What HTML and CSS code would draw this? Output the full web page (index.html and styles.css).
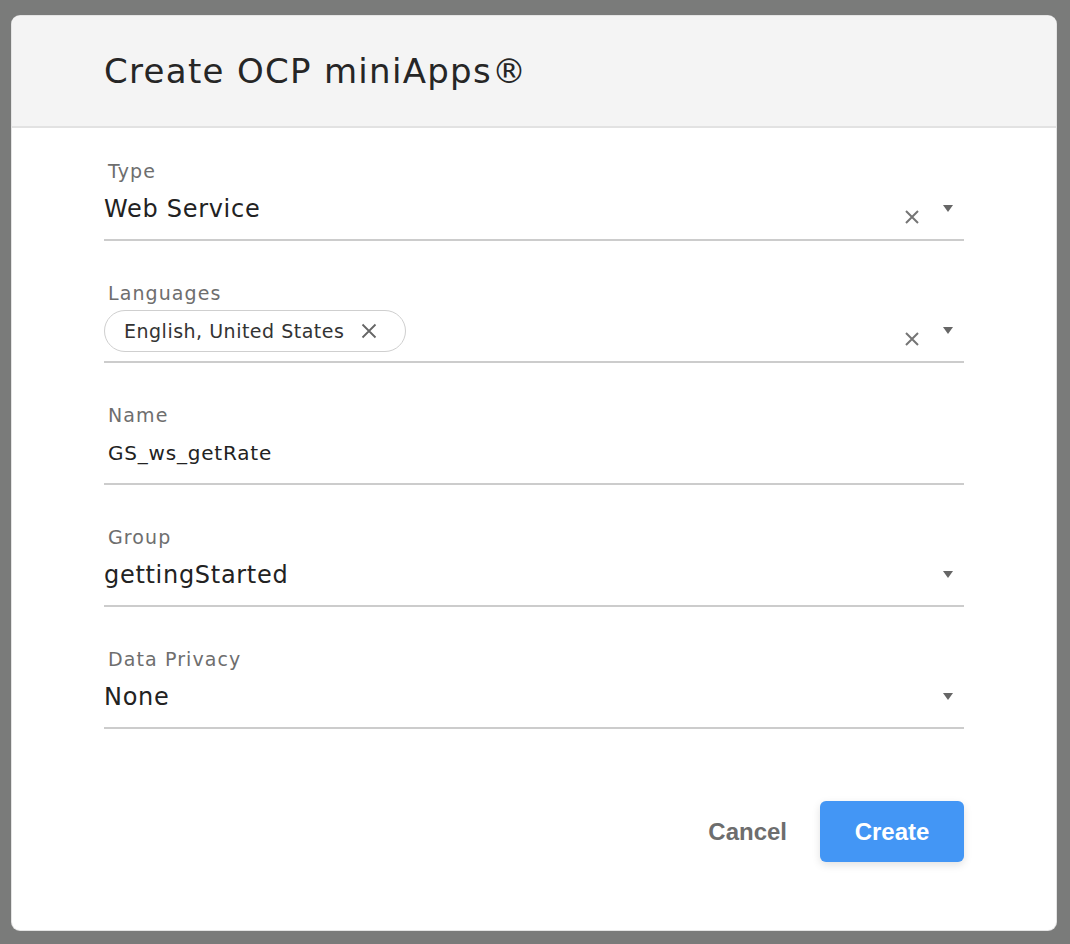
FILE: index.html
```html
<!DOCTYPE html>
<html lang="en">
<head>
    <meta charset="UTF-8">
    <meta name="viewport" content="width=device-width, initial-scale=1.0">
    <title>Create OCP miniApps</title>
    <link rel="stylesheet" href="styles.css">
</head>
<body>
    <div class="dialog">
        <div class="dialog-header">
            <h1>Create OCP miniApps&reg;</h1>
        </div>
        <form class="dialog-body">
            <div class="field">
                <label>Type</label>
                <div class="field-row">
                    <span class="value">Web Service</span>
                    <span class="clear-btn">
                        <svg width="16" height="16" viewBox="0 0 16 16"><path d="M2 2L14 14M14 2L2 14" stroke="#757575" stroke-width="2"/></svg>
                    </span>
                    <span class="arrow"></span>
                </div>
            </div>
            <div class="field">
                <label>Languages</label>
                <div class="field-row">
                    <span class="chip">English, United States
                        <svg width="16" height="16" viewBox="0 0 16 16"><path d="M1.5 1.5L14.5 14.5M14.5 1.5L1.5 14.5" stroke="#666" stroke-width="1.8"/></svg>
                    </span>
                    <span class="spacer"></span>
                    <span class="clear-btn">
                        <svg width="16" height="16" viewBox="0 0 16 16"><path d="M2 2L14 14M14 2L2 14" stroke="#757575" stroke-width="2"/></svg>
                    </span>
                    <span class="arrow"></span>
                </div>
            </div>
            <div class="field">
                <label>Name</label>
                <div class="field-row">
                    <input type="text" class="text-input" value="GS_ws_getRate">
                </div>
            </div>
            <div class="field">
                <label>Group</label>
                <div class="field-row">
                    <span class="value">gettingStarted</span>
                    <span class="arrow"></span>
                </div>
            </div>
            <div class="field">
                <label>Data Privacy</label>
                <div class="field-row">
                    <span class="value">None</span>
                    <span class="arrow"></span>
                </div>
            </div>
            <div class="actions">
                <button type="button" class="cancel-btn">Cancel</button>
                <button type="button" class="create-btn">Create</button>
            </div>
        </form>
    </div>
</body>
</html>
```

FILE: styles.css
```css
body {
    margin: 0;
    padding: 16px 14px 14px 12px;
    background-color: #7a7b7a;
    font-family: "DejaVu Sans", "Open Sans", sans-serif;
}
.dialog {
    background: #ffffff;
    border-radius: 8px;
    height: 914px;
    overflow: hidden;
    box-shadow: 0 0 0 1px #e4e4e4;
}
.dialog-header {
    background: #f4f4f4;
    height: 110px;
    border-bottom: 2px solid #e2e2e2;
    display: flex;
    align-items: center;
    padding-left: 92px;
}
.dialog-header h1 {
    margin: 0;
    font-size: 34px;
    font-weight: 400;
    letter-spacing: 1.3px;
    color: #262626;
}
.dialog-body {
    padding: 31px 92px 0 92px;
}
.field {
    margin-bottom: 40px;
}
.field label {
    display: block;
    height: 24px;
    line-height: 24px;
    font-size: 19px;
    letter-spacing: 1.1px;
    color: #6e6e6e;
    padding-left: 4px;
}
.field-row {
    display: flex;
    align-items: center;
    height: 52px;
    padding-bottom: 4px;
    border-bottom: 2px solid #cccccc;
    padding-right: 11px;
}
.value {
    flex: 1;
    font-size: 24px;
    letter-spacing: 0.7px;
    color: #222;
}
.spacer {
    flex: 1;
}
.text-input {
    flex: 1;
    border: none;
    outline: none;
    padding: 0 4px;
    font-family: inherit;
    font-size: 20px;
    letter-spacing: 0.8px;
    color: #222;
    background: transparent;
}
.clear-btn {
    display: flex;
    margin-top: 16px;
    margin-right: 23px;
}
.arrow {
    width: 0;
    height: 0;
    border-left: 5px solid transparent;
    border-right: 5px solid transparent;
    border-top: 7px solid #666;
    margin-top: -2px;
}
.chip {
    display: flex;
    align-items: center;
    gap: 17px;
    height: 40px;
    padding: 0 28px 0 19px;
    border: 1px solid #cfcfcf;
    border-radius: 21px;
    font-size: 19px;
    letter-spacing: 0.5px;
    color: #333;
}
.actions {
    display: flex;
    justify-content: flex-end;
    align-items: center;
    gap: 33px;
    margin-top: 72px;
}
.cancel-btn {
    background: none;
    border: none;
    padding: 0;
    font-family: "Liberation Sans", Arial, sans-serif;
    font-size: 24px;
    font-weight: bold;
    color: #6d6d6d;
    cursor: pointer;
}
.create-btn {
    width: 144px;
    height: 61px;
    background-color: #4396f5;
    border: none;
    border-radius: 6px;
    box-shadow: 0 3px 8px rgba(0, 0, 0, 0.12);
    font-family: "Liberation Sans", Arial, sans-serif;
    font-size: 24px;
    font-weight: bold;
    color: #ffffff;
    cursor: pointer;
}
```
